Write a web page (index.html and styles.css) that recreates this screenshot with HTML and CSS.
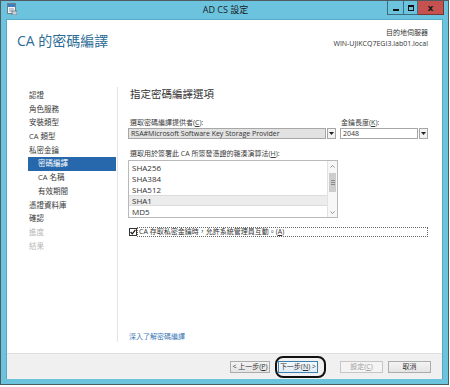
FILE: index.html
```html
<!DOCTYPE html>
<html lang="zh-Hant">
<head>
<meta charset="utf-8">
<title>AD CS 設定</title>
<link rel="stylesheet" href="styles.css">
</head>
<body>
<div class="window">
  <div class="titlebar">
    <div class="tb-left">
      <svg class="app-icon" width="10" height="12" viewBox="0 0 10 12">
        <rect x="0.5" y="0.5" width="8" height="10" fill="#f4f7fa" stroke="#6d7f8d"/>
        <rect x="1" y="1" width="7" height="3" fill="#3f7fbf"/>
        <line x1="2" y1="6" x2="7" y2="6" stroke="#8a98a4"/>
        <line x1="2" y1="8" x2="6" y2="8" stroke="#8a98a4"/>
        <rect x="5" y="8" width="5" height="4" fill="#c9d3dc" stroke="#5c6b78" stroke-width="0.8"/>
      </svg>
    </div>
    <div class="tb-title">AD CS 設定</div>
    <div class="tb-right">
      <div class="cap cap-min"><span class="min-bar"></span></div>
      <div class="cap cap-max"><span class="max-box"></span></div>
      <div class="cap cap-close">x</div>
    </div>
  </div>

  <div class="client">
    <div class="header">
      <div class="page-title">CA 的密碼編譯</div>
      <div class="server">
        <div>目的地伺服器</div>
        <div>WIN-UJIKCQ7EGI3.lab01.local</div>
      </div>
    </div>

    <div class="body">
      <ul class="nav">
        <li>認證</li>
        <li>角色服務</li>
        <li>安裝類型</li>
        <li>CA 類型</li>
        <li>私密金鑰</li>
        <li class="sub active">密碼編譯</li>
        <li class="sub">CA 名稱</li>
        <li class="sub">有效期間</li>
        <li>憑證資料庫</li>
        <li>確認</li>
        <li class="disabled">進度</li>
        <li class="disabled">結果</li>
      </ul>

      <div class="content">
        <div class="section-title">指定密碼編譯選項</div>

        <div class="row-labels">
          <div class="label label-provider">選取密碼編譯提供者(<u>C</u>):</div>
          <div class="label label-key">金鑰長度(<u>K</u>):</div>
        </div>
        <div class="row-combos">
          <div class="combo combo-provider">
            <div class="combo-field gray">RSA#Microsoft Software Key Storage Provider</div>
            <div class="combo-btn"><svg width="5" height="3" viewBox="0 0 5 3"><path d="M0 0H5L2.5 3Z" fill="#222"/></svg></div>
          </div>
          <div class="combo combo-key">
            <div class="combo-field">2048</div>
            <div class="combo-btn"><svg width="5" height="3" viewBox="0 0 5 3"><path d="M0 0H5L2.5 3Z" fill="#222"/></svg></div>
          </div>
        </div>

        <div class="label label-hash">選取用於簽署此 CA 所簽發憑證的雜湊演算法(<u>H</u>):</div>
        <div class="listbox">
          <ul class="list-items">
            <li>SHA256</li>
            <li>SHA384</li>
            <li>SHA512</li>
            <li class="selected">SHA1</li>
            <li>MD5</li>
          </ul>
          <div class="scrollbar">
            <div class="sb-arrow"><svg width="5" height="3" viewBox="0 0 5 3"><path d="M0.5 2.5L2.5 0.5L4.5 2.5" fill="none" stroke="#777" stroke-width="0.8"/></svg></div>
            <div class="sb-track">
              <div class="sb-thumb"><span></span><span></span><span></span></div>
            </div>
            <div class="sb-arrow"><svg width="5" height="3" viewBox="0 0 5 3"><path d="M0.5 0.5L2.5 2.5L4.5 0.5" fill="none" stroke="#777" stroke-width="0.8"/></svg></div>
          </div>
        </div>

        <div class="check-row">
          <div class="checkbox"><svg width="6" height="6" viewBox="0 0 6 6"><path d="M0.6 3L2.3 4.8L5.4 0.8" fill="none" stroke="#111" stroke-width="1.2"/></svg></div>
          <div class="check-label">CA 存取私密金鑰時，允許系統管理員互動。(<u>A</u>)</div>
        </div>

        <div class="link">深入了解密碼編譯</div>
      </div>
    </div>

    <div class="footer">
      <div class="btn btn-back">&lt; 上一步(<u>P</u>)</div>
      <div class="btn btn-next">下一步(<u>N</u>) &gt;<span class="annot"></span></div>
      <div class="btn btn-disabled">設定(<u>C</u>)</div>
      <div class="btn btn-cancel">取消</div>
    </div>
  </div>
</div>
</body>
</html>
```

FILE: styles.css
```css
* { box-sizing: border-box; }

html, body {
  margin: 0;
  padding: 0;
  background: #ffffff;
}

body {
  font-family: "Open Sans", "Noto Sans CJK TC", sans-serif;
  color: #3a3a3a;
}

ul { list-style: none; margin: 0; padding: 0; }
u { text-decoration: underline; text-underline-offset: 1px; }

.window {
  width: 449px;
  height: 385px;
  border: 1px solid #4e5b61;
  background: #6cc3de;
  display: flex;
  flex-direction: column;
}

/* title bar */
.titlebar {
  height: 18px;
  display: grid;
  grid-template-columns: 1fr auto 1fr;
  align-items: start;
  padding: 0 4px 0 6px;
}

.tb-left {
  padding-top: 2px;
  display: flex;
}

.tb-title {
  font-size: 9px;
  line-height: 18px;
  color: #1b1b1b;
}

.tb-right {
  display: flex;
  justify-content: flex-end;
}

.cap {
  height: 14px;
  border: 1px solid #3d6c7d;
  border-top: none;
  display: flex;
  align-items: center;
  justify-content: center;
  background: #6cc3de;
}

.cap-min { width: 16px; border-right: none; }
.cap-max { width: 15px; }
.cap-close {
  width: 26px;
  border-left: none;
  background: #c5524e;
  border-color: #7c3432;
  font-size: 9px;
  font-weight: bold;
  line-height: 12px;
  color: #1a1a1a;
  font-family: "DejaVu Sans", sans-serif;
}

.min-bar {
  width: 6px;
  height: 2px;
  background: #111;
  margin-top: 4px;
}

.max-box {
  width: 6px;
  height: 6px;
  border: 1px solid #111;
  border-top-width: 2px;
}

/* client */
.client {
  margin: 0 5px;
  height: 360px;
  background: #ffffff;
  border: 1px solid #58a9c6;
  border-bottom: none;
  display: flex;
  flex-direction: column;
}

.header {
  height: 67px;
  display: flex;
  justify-content: space-between;
  align-items: flex-start;
  padding: 0 14px 0 10px;
}

.page-title {
  padding-top: 12px;
  font-size: 14px;
  line-height: 18px;
  color: #2d6d96;
}

.server {
  padding-top: 7px;
  text-align: right;
  font-size: 7px;
  line-height: 11px;
  color: #333;
}

.body {
  height: 266px;
  display: flex;
  padding-bottom: 11px;
}

.nav {
  width: 111px;
  border-right: 1px solid #e3e3e3;
  padding-top: 2px;
  font-size: 7.5px;
}

.nav li {
  height: 13.7px;
  line-height: 13.7px;
  padding-left: 22px;
  color: #3a3a3a;
  white-space: nowrap;
}

.nav li.sub { padding-left: 31px; }

.nav li.active {
  margin-left: 21px;
  width: 88px;
  padding-left: 10px;
  background: #2668ab;
  color: #ffffff;
}

.nav li.disabled { color: #b8b8b8; }

.content {
  flex: 1;
  display: flex;
  flex-direction: column;
  padding: 0 14px 0 10px;
}

.section-title {
  margin-left: 2px;
  font-size: 10.5px;
  line-height: 15px;
  color: #333;
}

.label {
  font-size: 7px;
  line-height: 10px;
  color: #3a3a3a;
  white-space: nowrap;
}

.row-labels {
  margin-top: 16px;
  display: flex;
}

.label-provider { width: 212px; padding-left: 2px; }
.label-key { padding-left: 1px; }

.row-combos {
  display: flex;
  gap: 4px;
}

.combo {
  display: flex;
  gap: 1px;
  height: 11px;
}

.combo-provider { width: 208px; }
.combo-key { width: 88px; }

.combo-field {
  flex: 1;
  border: 1px solid #a7a7a7;
  background: #ffffff;
  font-size: 7px;
  line-height: 9px;
  padding-left: 2px;
  color: #333;
  white-space: nowrap;
  overflow: hidden;
}

.combo-field.gray { background: #e2e2e2; }

.combo-btn {
  width: 9px;
  border: 1px solid #a7a7a7;
  background: #f2f2f2;
  display: flex;
  align-items: center;
  justify-content: center;
}

.label-hash {
  margin-top: 10px;
  padding-left: 2px;
}

.listbox {
  margin-top: 1px;
  width: 210px;
  height: 58px;
  border: 1px solid #b9b9b9;
  display: flex;
}

.list-items {
  flex: 1;
  padding-top: 1px;
}

.list-items li {
  height: 11px;
  line-height: 11px;
  font-size: 8px;
  padding-left: 3px;
  color: #333;
}

.list-items li.selected {
  background: #ececec;
  border-top: 1px solid #dcdcdc;
  border-bottom: 1px solid #dcdcdc;
  line-height: 9px;
}

.scrollbar {
  width: 10px;
  border-left: 1px solid #e2e2e2;
  display: flex;
  flex-direction: column;
  background: #f7f7f7;
}

.sb-arrow {
  height: 10px;
  display: flex;
  align-items: center;
  justify-content: center;
}

.sb-track {
  flex: 1;
}

.sb-thumb {
  margin: 2px 1px 0 1px;
  height: 19px;
  background: #cdcdcd;
  display: flex;
  flex-direction: column;
  align-items: center;
  justify-content: center;
  gap: 1px;
}

.sb-thumb span {
  width: 4px;
  height: 1px;
  background: #8a8a8a;
}

.check-row {
  margin-top: 9px;
  display: flex;
  align-items: flex-start;
}

.checkbox {
  margin-left: 1px;
  margin-top: 1px;
  width: 8px;
  height: 8px;
  border: 1px solid #333;
  background: #fff;
  display: flex;
  align-items: center;
  justify-content: center;
}

.check-label {
  flex: 1;
  height: 10px;
  border: 1px dotted #666;
  font-size: 7px;
  line-height: 8px;
  padding-left: 1px;
  color: #333;
  white-space: nowrap;
}

.link {
  margin-top: auto;
  padding-left: 1px;
  font-size: 7px;
  line-height: 10px;
  color: #3b78b6;
}

.footer {
  flex: 1;
  border-top: 1px solid #dfdfdf;
  background: #f0f0f0;
  display: flex;
  justify-content: flex-end;
  align-items: center;
  padding-right: 11px;
}

.btn {
  position: relative;
  height: 12px;
  border: 1px solid #acacac;
  background: linear-gradient(#f3f3f3, #e4e4e4);
  font-size: 7px;
  line-height: 10px;
  text-align: center;
  color: #333;
  white-space: nowrap;
}

.btn-back { width: 40px; }
.btn-next {
  width: 40px;
  margin-left: 8px;
  border-color: #3c7fb1;
  background: linear-gradient(#f2f7fb, #e3eef7);
}
.btn-disabled {
  width: 43px;
  margin-left: 22px;
  color: #a0a0a0;
  border-color: #c6c6c6;
  background: #f4f4f4;
}
.btn-cancel { width: 43px; margin-left: 5px; }

.annot {
  position: absolute;
  left: -4px;
  top: -6px;
  width: 51px;
  height: 22px;
  border: 2px solid #111;
  border-radius: 8px;
}
```
